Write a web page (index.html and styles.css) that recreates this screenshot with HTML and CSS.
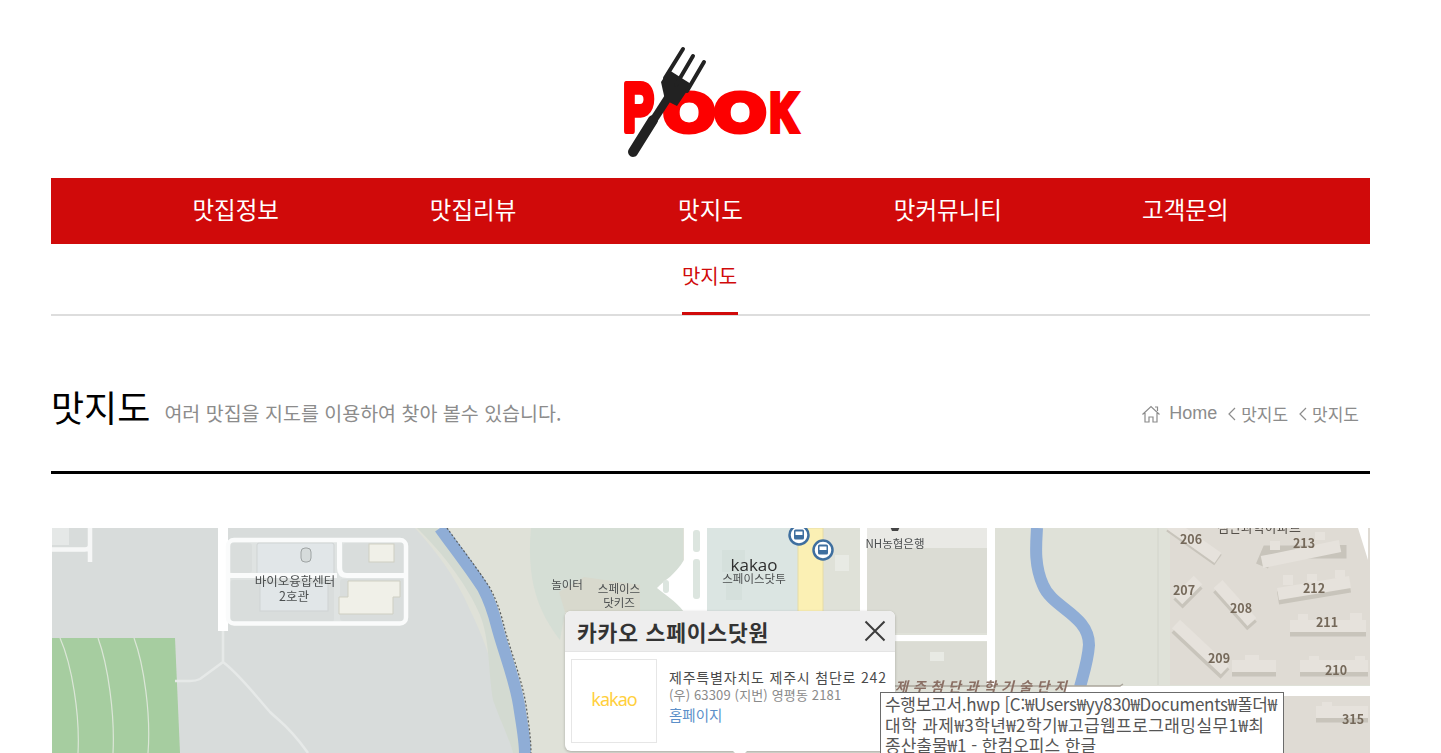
FILE: index.html
```html
<!DOCTYPE html>
<html lang="ko">
<head>
<meta charset="utf-8">
<title>맛지도</title>
<link rel="stylesheet" href="styles.css">
</head>
<body>
<div class="page">
  <header class="logo-row">
    <a class="logo" href="#" aria-label="POOK">
      <svg width="220" height="140" viewBox="600 30 220 140">
        <text class="logo-p" transform="translate(622 131) scale(.68 1)">P</text>
        <text class="logo-word" transform="translate(663 131) scale(1.2 1)">O</text>
        <text class="logo-word" transform="translate(714 131) scale(1.2 1)">O</text>
        <text class="logo-word" transform="translate(769 131) scale(.7 1)">K</text>
        <path class="fork-handle" d="M632 152 L652 120"/>
        <path class="fork-neck" d="M650 124 L672 90"/>
        <path class="fork-head" d="M660 82 L668 70 L690 84 L686 91 L676 106 L664 100 Z"/>
        <path class="fork-tine" d="M664 78 L682 49 M675 85 L692 56 M686 91 L703 62"/>
      </svg>
    </a>
  </header>

  <nav class="main-nav">
    <a href="#">맛집정보</a>
    <a href="#">맛집리뷰</a>
    <a href="#">맛지도</a>
    <a href="#">맛커뮤니티</a>
    <a href="#">고객문의</a>
  </nav>

  <nav class="sub-nav"><a href="#">맛지도</a></nav>

  <section class="title-row">
    <div class="title-main">
      <h1>맛지도</h1>
      <p>여러 맛집을 지도를 이용하여 찾아 볼수 있습니다.</p>
    </div>
    <div class="crumbs">
      <svg class="home-ico" width="20" height="20" viewBox="0 0 20 20"><path d="M1.500 10.500 L10 2.500 L18.500 10.500 M4 9 V18 H8 V13 H12 V18 H16 V9 M14 3 H16.500 V7"/></svg>
      <span class="crumb-home">Home</span>
      <svg class="chev" width="8" height="14" viewBox="0 0 8 14"><path d="M7 1 L1 7 L7 13"/></svg>
      <span>맛지도</span>
      <svg class="chev" width="8" height="14" viewBox="0 0 8 14"><path d="M7 1 L1 7 L7 13"/></svg>
      <span>맛지도</span>
    </div>
  </section>

  <section class="map">
    <svg class="map-art" width="1318" height="225" viewBox="52 528 1318 225">
      <rect class="m-grey" x="52" y="528" width="1318" height="225"/>
      <path class="m-land" d="M415 528 H1370 V753 H513 C500 700 495 660 470 610 C455 575 435 550 415 528 Z"/>
      <path class="m-bank" d="M417 528 C445 555 470 590 480 615 C490 640 488 670 493 700 C500 720 510 740 513 753 H528 C520 700 505 630 490 590 C475 560 455 545 437 528 Z"/>
      <path class="m-play" d="M531 528 H683 V612 H565 L560 640 C545 620 525 590 531 528 Z"/>
      <path class="m-plaza" d="M559 592 L584 577 L640 585 V612 H565 Z"/>
      <rect class="m-kakao" x="707" y="528" width="91" height="90"/>
      <path class="m-bld2" d="M722 550 H745 V572 H722 Z M726 573 H742 V600 H726 Z"/>
      <rect class="m-yellow" x="798" y="528" width="25" height="90"/>
      <rect class="m-block" x="867" y="528" width="120" height="105"/>
      <rect class="m-blockw" x="867" y="528" width="120" height="20"/>
      <rect class="m-block" x="894" y="642" width="93" height="45"/>
      <rect class="m-pale" x="835" y="555" width="14" height="16"/>
      <rect class="m-pale" x="930" y="652" width="14" height="9"/>
      <rect class="m-resi" x="1170" y="528" width="200" height="157"/>
      <rect class="m-resi" x="1170" y="696" width="200" height="57"/>
      <path class="m-line" d="M1158 528 V685"/>
      <path class="m-road" d="M1358 528 L1368 560 V528 Z"/>

      <path class="m-green" d="M52 638 H175 L180 753 H52 Z"/>
      <path class="m-lane" d="M60 638 C72 665 80 715 78 753 M98 638 C108 665 115 715 113 753 M134 638 C144 665 151 715 148 753"/>
      <path class="m-path" d="M223 631 V662 L200 679 Q196 681 190 681 H175 M223 662 C240 675 255 695 270 712 C280 722 288 725 308 753"/>

      <rect class="m-pale2" x="52" y="528" width="17" height="17"/>
      <path class="m-road-s" d="M52 549.500 H85 Q90 549.500 90 545 V528 M90 545 V562"/>
      <rect class="m-campus" x="228" y="538" width="180" height="87" rx="7"/>
      <rect class="m-lot" x="230" y="543" width="22" height="30" rx="3"/>
      <rect class="m-bldg" x="257" y="543" width="77" height="32" rx="2"/>
      <rect class="m-lot" x="343" y="543" width="62" height="30" rx="3"/>
      <rect class="m-cream" x="369" y="544" width="25" height="18"/>
      <rect class="m-lot" x="230" y="580" width="104" height="42" rx="3"/>
      <rect class="m-bldg" x="260" y="583" width="68" height="28"/>
      <rect class="m-lot" x="340" y="579" width="65" height="42" rx="3"/>
      <path class="m-cream" d="M348 581 H400 V597 H393 V614 H339 V597 H348 Z"/>
      <rect class="m-tower" x="301" y="548" width="10" height="14" rx="4"/>
      <rect class="m-road" x="218" y="528" width="10" height="103"/>
      <path class="m-road-w" d="M228 575.500 H337 M339.500 540 V568 Q339.500 575.500 347 575.500 H405"/>
      <rect class="m-frame" x="228" y="540" width="178" height="83.500" rx="6"/>

      <path class="m-river" d="M440 528 C452 545 468 565 483 588 C492 605 495 618 498 630 C505 655 515 680 519 705 C522 725 525 740 525 753"/>
      <path class="m-dots" d="M447 528 C459 545 475 565 490 588 C499 605 502 618 505 630 C512 655 522 680 526 705 C529 725 531 740 531 753"/>
      <path class="m-river" d="M1037 528 C1036 545 1034 565 1043 585 C1052 608 1089 615 1089 645 C1088 660 1084 672 1080 687"/>

      <rect class="m-road" x="684" y="528" width="23" height="90"/>
      <rect class="m-med" x="693" y="530" width="7" height="22" rx="3"/>
      <rect class="m-med" x="693" y="559" width="7" height="40" rx="3"/>
      <path class="m-road" d="M657 588 C665 580 675 575 684 560 V612 C675 600 665 595 657 588 Z"/>
      <rect class="m-med" x="663" y="580" width="6" height="13" rx="3"/>
      <rect class="m-road" x="860" y="528" width="7" height="112"/>
      <rect class="m-road" x="894" y="635" width="100" height="6"/>
      <rect class="m-road" x="987" y="528" width="8" height="160"/>
      <rect class="m-road" x="1064" y="686" width="306" height="10"/>

      <path class="m-edge" d="M894 686 H1120 L1123 684"/>

      <g class="b-shadow">
        <path d="M1170 526 L1218 560"/><path d="M1262 566 L1268 552 H1340 V545"/>
        <path d="M1178 604 L1198 584"/><path d="M1218 588 L1252 626"/>
        <path d="M1278 598 L1350 586"/><path d="M1290 630 H1366"/>
        <path d="M1176 628 L1225 674"/><path d="M1232 670 H1276"/>
        <path d="M1300 670 H1368"/><path d="M1316 716 H1368"/>
      </g>
      <g class="b-top">
        <path d="M1170 524 L1218 558"/><path d="M1262 562 L1340 546"/>
        <path d="M1178 600 L1198 580"/><path d="M1218 584 L1252 622"/>
        <path d="M1278 594 L1350 582"/><path d="M1290 626 H1366"/>
        <path d="M1176 624 L1225 670"/><path d="M1232 666 H1276"/>
        <path d="M1300 666 H1368"/><path d="M1316 712 H1368"/>
      </g>
      <g class="b-nub">
        <rect x="1270" y="541" width="10" height="9"/><rect x="1315" y="532" width="10" height="8"/>
        <rect x="1283" y="575" width="10" height="10"/><rect x="1307" y="574" width="10" height="8"/><rect x="1335" y="570" width="10" height="8"/>
        <rect x="1298" y="614" width="10" height="8"/><rect x="1350" y="613" width="12" height="8"/>
        <rect x="1245" y="655" width="14" height="8"/><rect x="1309" y="656" width="10" height="8"/><rect x="1355" y="656" width="10" height="8"/>
        <rect x="1322" y="702" width="10" height="8"/>
      </g>

      <g class="bus">
        <circle cx="799" cy="535" r="9.500"/><rect x="794" y="529.500" width="10" height="10" rx="1.500"/><rect class="bus-win" x="795.500" y="531.500" width="7" height="3.500"/>
        <circle cx="823" cy="550" r="9.500"/><rect x="818" y="544.500" width="10" height="10" rx="1.500"/><rect class="bus-win" x="819.500" y="546.500" width="7" height="3.500"/>
      </g>
      <path class="nh" d="M889 524 H901 L898 531 H892 Z"/>

      <g class="lb">
        <text class="lb-md" x="295" y="586">바이오융합센터</text>
        <text class="lb-md" x="294" y="601">2호관</text>
        <text class="lb-sm" x="567" y="589">놀이터</text>
        <text class="lb-sm" x="619" y="593">스페이스</text>
        <text class="lb-sm" x="619" y="607">닷키즈</text>
        <text class="lb-kakao" x="754" y="571">kakao</text>
        <text class="lb-sm" x="754" y="583">스페이스닷투</text>
        <text class="lb-sm" x="895" y="548">NH농협은행</text>
        <text class="lb-num" x="1191" y="544">206</text>
        <text class="lb-num" x="1304" y="548">213</text>
        <text class="lb-num" x="1184" y="595">207</text>
        <text class="lb-num" x="1314" y="593">212</text>
        <text class="lb-num" x="1241" y="613">208</text>
        <text class="lb-num" x="1327" y="627">211</text>
        <text class="lb-num" x="1219" y="663">209</text>
        <text class="lb-num" x="1336" y="675">210</text>
        <text class="lb-num" x="1353" y="724">315</text>
        <text class="lb-apt" x="1259" y="532">첨단과학아파트</text>
        <text class="lb-zone" x="895" y="692">제주첨단과학기술단지</text>
      </g>
    </svg>

    <article class="popup">
      <header class="popup-head">
        <h2>카카오 스페이스닷원</h2>
        <svg class="popup-x" width="22" height="22" viewBox="0 0 22 22"><path d="M1.500 1.500 L20.500 20.500 M20.500 1.500 L1.500 20.500"/></svg>
      </header>
      <div class="popup-body">
        <div class="popup-thumb">kakao</div>
        <div class="popup-info">
          <p class="addr">제주특별자치도 제주시 첨단로 242</p>
          <p class="addr-sub">(우) 63309 (지번) 영평동 2181</p>
          <a class="home-link" href="#">홈페이지</a>
        </div>
      </div>
    </article>
    <div class="tooltip">
      <span class="tip-line tip-first">수행보고서.hwp [C:₩Users₩yy830₩Documents₩폴더₩</span>
      <span class="tip-line tip-second">대학 과제₩3학년₩2학기₩고급웹프로그래밍실무1₩최</span>
      <span class="tip-line">종산출물₩1 - 한컴오피스 한글</span>
    </div>
  </section>
</div>
</body>
</html>
```

FILE: styles.css
```css
* { box-sizing: border-box; }
html, body { margin: 0; height: 753px; overflow: hidden; background: #fff; }
body { font-family: "Noto Sans CJK KR", "Noto Sans", sans-serif; color: #000; }
a { text-decoration: none; color: inherit; }
h1, h2, p { margin: 0; font-weight: 400; }

.page { margin-left: 51px; width: 1319px; }

.logo-row { height: 178px; display: flex; justify-content: center; padding: 30px 0 0 0; }
.logo { display: block; width: 220px; height: 140px; }
.logo-p, .logo-word { font-family: "Liberation Sans", sans-serif; font-weight: 700; fill: #fd0000; stroke: #fd0000; stroke-linejoin: round; }
.logo-p { font-size: 68px; stroke-width: 6px; }
.logo-word { font-size: 54px; stroke-width: 6px; stroke-linejoin: miter; }
.fork-handle { stroke: #222; stroke-width: 10px; stroke-linecap: round; fill: none; }
.fork-neck { stroke: #222; stroke-width: 8px; fill: none; }
.fork-head { fill: #222; }
.fork-tine { stroke: #222; stroke-width: 4px; stroke-linecap: round; fill: none; }

.main-nav { height: 66px; background: #d00a0a; display: flex; justify-content: center; }
.main-nav a { width: 237.400px; display: flex; align-items: center; justify-content: center; color: #fff; font-size: 23.500px; font-weight: 400; padding-bottom: 5px; }

.sub-nav { height: 72px; border-bottom: 2px solid #ddd; display: flex; justify-content: center; }
.sub-nav a { height: 71px; border-bottom: 3px solid #d00a0a; color: #d00a0a; font-size: 20px; padding: 16px 0 0; line-height: 32px; width: 56px; white-space: nowrap; display: flex; justify-content: center; margin-left: -2px; }

.title-row { height: 158px; border-bottom: 3px solid #000; display: flex; justify-content: space-between; align-items: flex-start; padding-top: 64px; margin-bottom: 54px; }
.title-main { display: flex; align-items: baseline; gap: 14px; }
.title-main h1 { font-size: 36px; line-height: 52px; }
.title-main p { font-size: 19.500px; color: #8c8c8c; position: relative; top: -1px; }
.crumbs { display: flex; align-items: center; gap: 8px; color: #8c8c8c; font-size: 17px; padding: 21px 11px 0 0; }
.crumb-home { font-family: "Liberation Sans", sans-serif; font-size: 18px; }
.home-ico path, .chev path { fill: none; stroke: #8c8c8c; stroke-width: 1.200px; }
.chev { margin-left: 3px; margin-right: -3px; }

.map { position: relative; margin-left: 1px; width: 1318px; height: 225px; overflow: hidden; }
.map-art { display: block; filter: blur(.4px); }
.m-grey { fill: #d8dcdb; }
.m-land { fill: #dfe1d8; }
.m-bank { fill: #d3dad1; }
.m-play { fill: #d5ded5; }
.m-plaza { fill: #d8d9cd; }
.m-kakao { fill: #dbe5e2; }
.m-bld2 { fill: #d5e0dc; }
.m-yellow { fill: #fbf0b4; stroke: #e6dca6; }
.m-block { fill: #dbdcd4; }
.m-blockw { fill: #e9e9e5; }
.m-pale { fill: #e8eae4; }
.m-resi { fill: #dfdbd4; }
.m-line { fill: none; stroke: #d2d4cb; stroke-width: 1px; }
.m-road { fill: #fff; }
.m-green { fill: #a6cda0; }
.m-lane { fill: none; stroke: #dce6d8; stroke-width: 1.200px; }
.m-path { fill: none; stroke: #e6e9e8; stroke-width: 2.500px; }
.m-pale2 { fill: #e5e8e7; }
.m-road-s { fill: none; stroke: #f6f7f7; stroke-width: 4.500px; }
.m-campus { fill: #dfe3e2; }
.m-lot { fill: #d9dddc; }
.m-bldg { fill: #e1e6e8; stroke: #cfd3d3; stroke-width: 1px; }
.m-cream { fill: #f0f0e8; stroke: #cfcfc2; stroke-width: 1px; }
.m-tower { fill: #d6dbdb; stroke: #9ea3a3; stroke-width: 1px; }
.m-road-w { fill: none; stroke: #fafbfb; stroke-width: 5px; }
.m-frame { fill: none; stroke: #fafbfb; stroke-width: 4.500px; }
.m-river { fill: none; stroke: #8fadd6; stroke-width: 12px; }
.m-dots { fill: none; stroke: #5a5e5e; stroke-width: 1.200px; stroke-dasharray: 2 2; }
.m-med { fill: #dce5df; }
.m-edge { fill: none; stroke: #aaa59b; stroke-width: 1.500px; }
.b-shadow path { fill: none; stroke: #c8c4bb; stroke-width: 13px; }
.b-top path { fill: none; stroke: #e6e2dc; stroke-width: 12px; }
.b-nub rect { fill: #e6e2dc; }
.bus circle { fill: #fff; stroke: #3f6f9f; stroke-width: 2.500px; }
.bus rect { fill: #3f6f9f; }
.bus rect.bus-win { fill: #fff; }
.nh { fill: #444; }
.lb text { text-anchor: middle; font-family: "Noto Sans CJK KR", sans-serif; }
.lb-md { font-size: 12.500px; fill: #4c4f50; }
.lb-sm { font-size: 11.500px; fill: #4c4f50; }
.lb text.lb-kakao { font-size: 17px; fill: #2e2e2e; font-family: "Open Sans", sans-serif; }
.lb-num { font-size: 12.500px; fill: #75695a; font-weight: 700; }
.lb-apt { font-size: 13px; fill: #55504a; }
.lb text.lb-zone { text-anchor: start; font-size: 14px; font-style: italic; fill: #8a6f64; font-weight: 700; letter-spacing: 4.800px; }

.popup { position: absolute; left: 513px; top: 83px; width: 330px; height: 140px; background: #fff; border-radius: 6px; box-shadow: 0 1px 3px rgba(0,0,0,.25); }
.popup::after { content: ""; position: absolute; left: 167px; bottom: -7px; border: 8px solid transparent; border-bottom: 0; border-top-color: #fff; }
.popup-head { height: 41px; background: #eee; border-bottom: 1px solid #e4e4e4; border-radius: 6px 6px 0 0; display: flex; justify-content: space-between; align-items: center; padding: 0 9px 0 12px; }
.popup-head h2 { font-size: 21.500px; font-weight: 700; color: #333; letter-spacing: .8px; }
.popup-x path { fill: none; stroke: #3c3c3c; stroke-width: 2px; }
.popup-body { display: flex; gap: 12px; padding: 7px 6px; }
.popup-thumb { width: 86px; height: 84px; border: 1px solid #e6e6e6; color: #ffcf3c; font-size: 18px; letter-spacing: -1px; font-family: "Noto Sans", sans-serif; display: flex; align-items: center; justify-content: center; padding-bottom: 4px; }
.popup-info { padding-top: 9px; white-space: nowrap; }
.addr { font-size: 14px; line-height: 18px; color: #4a4a4a; letter-spacing: .8px; }
.addr-sub { font-size: 13px; line-height: 17px; color: #8a8a8a; letter-spacing: .15px; }
.home-link { display: block; font-size: 14.500px; line-height: 24px; color: #5b8fc9; }

.tooltip { position: absolute; left: 828px; top: 164px; width: 404px; height: 80px; background: #fff; border: 1px solid #6b6b6b; padding: 1px 4px; font-size: 17px; line-height: 20.500px; color: #555; white-space: nowrap; }
.tip-line { display: block; }
.tip-first { letter-spacing: -.28px; }
.tip-second { letter-spacing: .42px; }
```
